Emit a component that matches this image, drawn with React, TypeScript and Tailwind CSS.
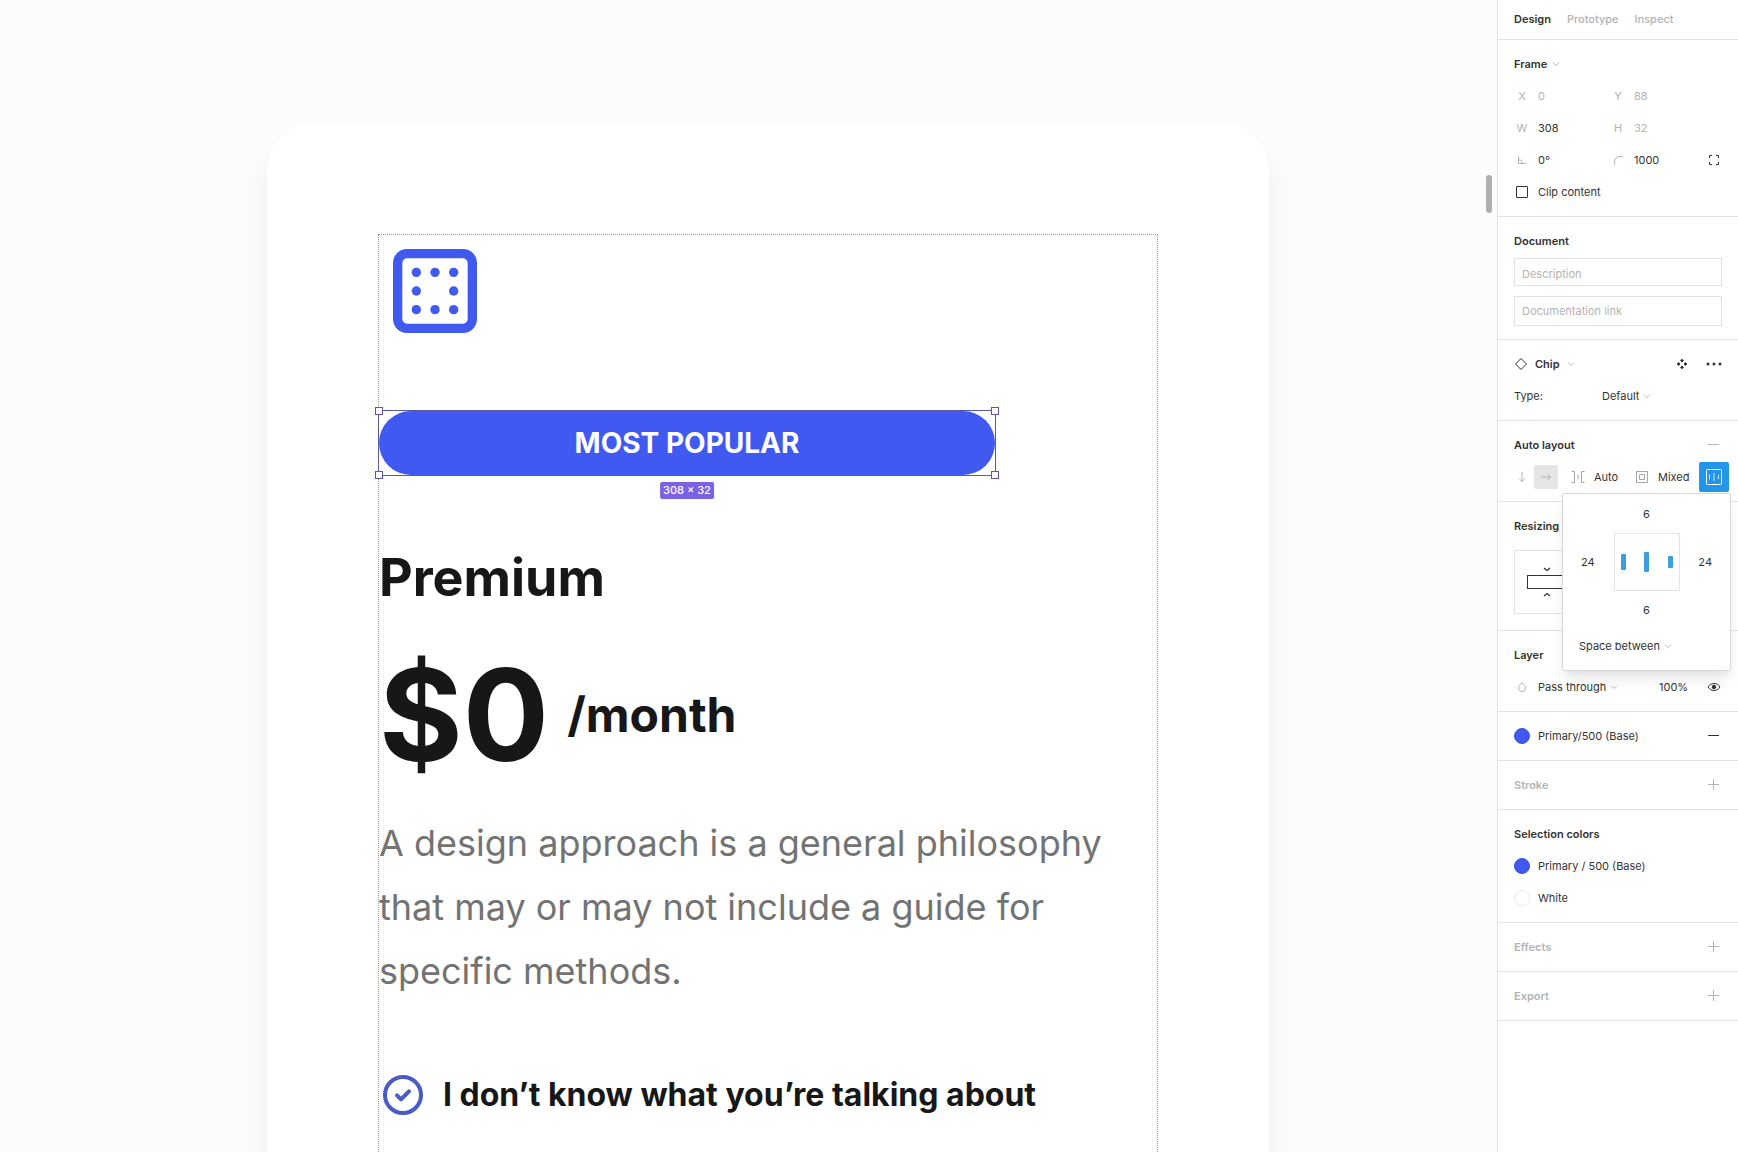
import type { ReactNode } from "react";
import { clsx } from "clsx";

interface SectionProps {
  children: ReactNode;
  className?: string;
}

function Section({ children, className }: SectionProps) {
  return (
    <section className={clsx("border-b border-[#e2e2e2] px-4 pt-2", className ?? "pb-2")}>
      {children}
    </section>
  );
}

interface RowProps {
  children: ReactNode;
  className?: string;
}

function Row({ children, className }: RowProps) {
  return (
    <div className={clsx("flex h-8 items-center", className)}>{children}</div>
  );
}

function Chevron({ className }: { className?: string }) {
  return (
    <svg
      viewBox="0 0 8 8"
      className={clsx("pointer-events-none size-2 text-[#b8b8b8]", className)}
      fill="none"
      stroke="currentColor"
      aria-hidden="true"
    >
      <path d="M1 2.5 4 5.5 7 2.5" />
    </svg>
  );
}

function PlusIcon() {
  return (
    <svg viewBox="0 0 16 16" className="size-4" stroke="currentColor">
      <path d="M2 7.5h11M7.5 2v11" />
    </svg>
  );
}

function MinusIcon() {
  return (
    <svg viewBox="0 0 16 16" className="size-4" stroke="currentColor">
      <path d="M2 7.5h11" />
    </svg>
  );
}

function AngleIcon() {
  return (
    <svg viewBox="0 0 16 16" className="size-4" fill="none" stroke="currentColor">
      <path d="M4.5 4v7.5H12M4.5 7.5a4 4 0 0 1 4 4" />
    </svg>
  );
}

function RadiusIcon() {
  return (
    <svg viewBox="0 0 16 16" className="size-4" fill="none" stroke="currentColor">
      <path d="M4.5 13v-3a5.500 5.500 0 0 1 5.500-5.500H13" />
    </svg>
  );
}

interface FieldProps {
  label: string;
  icon: ReactNode;
  value: string;
  muted?: boolean;
}

function Field({ label, icon, value, muted = false }: FieldProps) {
  return (
    <label className="flex items-center gap-2">
      <span className="flex w-4 justify-center text-[#b3b3b3]">{icon}</span>
      <input
        aria-label={label}
        defaultValue={value}
        className={clsx(
          "w-12 bg-transparent outline-none",
          muted ? "text-[#b3b3b3]" : "text-[#333333]",
        )}
      />
    </label>
  );
}

interface DropdownProps {
  label: string;
  options: string[];
}

function Dropdown({ label, options }: DropdownProps) {
  return (
    <div className="flex items-center gap-1">
      <select
        aria-label={label}
        className="field-sizing-content appearance-none bg-transparent outline-none"
      >
        {options.map((option) => (
          <option key={option}>{option}</option>
        ))}
      </select>
      <Chevron />
    </div>
  );
}

interface SwatchProps {
  name: string;
  className: string;
}

function Swatch({ name, className }: SwatchProps) {
  return (
    <button type="button" className="flex items-center gap-2">
      <span className={clsx("size-4 rounded-full border", className)} />
      {name}
    </button>
  );
}

function EmptySection({ title }: { title: string }) {
  return (
    <Section className="pb-2 text-[#b3b3b3]">
      <Row className="justify-between">
        <h2 className="font-semibold">{title}</h2>
        <button type="button" aria-label={`Add ${title}`}>
          <PlusIcon />
        </button>
      </Row>
    </Section>
  );
}

function AlignmentPopover() {
  return (
    <div className="absolute top-[72px] right-[7px] z-10 flex h-[178px] w-[169px] flex-col rounded-xs border border-[#d9d9d9] bg-white shadow-lg">
      <div className="flex flex-col items-center pt-3">
        <span className="leading-4">6</span>
        <div className="flex w-full items-center justify-between px-[18px] py-[11px]">
          <span>24</span>
          <div className="flex h-[58px] w-[66px] items-center justify-between border border-[#e5e5e5] px-[6px]">
            <span className="h-4 w-[5px] rounded-[1px] bg-[#3a9fdc]" />
            <span className="h-5 w-[5px] rounded-[1px] bg-[#3a9fdc]" />
            <span className="h-3 w-[5px] rounded-[1px] bg-[#3a9fdc]" />
          </div>
          <span>24</span>
        </div>
        <span className="leading-4">6</span>
      </div>
      <div className="px-4 pt-5">
        <Dropdown label="Spacing mode" options={["Space between", "Packed"]} />
      </div>
    </div>
  );
}

function AutoLayoutSection() {
  return (
    <Section className="relative pb-2">
      <Row className="justify-between">
        <h2 className="font-semibold">Auto layout</h2>
        <button
          type="button"
          aria-label="Remove auto layout"
          className="text-[#b3b3b3]"
        >
          <MinusIcon />
        </button>
      </Row>
      <Row className="-mr-[7px] justify-between">
        <div className="flex items-center gap-3">
          <div className="flex items-center gap-1 text-[#b3b3b3]">
            <button type="button" aria-label="Vertical">
              <svg
                viewBox="0 0 16 16"
                className="size-4"
                fill="none"
                stroke="currentColor"
              >
                <path d="M8 3v9.5M5 9.5l3 3 3-3" />
              </svg>
            </button>
            <button
              type="button"
              aria-label="Horizontal"
              className="flex size-6 items-center justify-center rounded-xs bg-[#e5e5e5]"
            >
              <svg
                viewBox="0 0 16 16"
                className="size-4"
                fill="none"
                stroke="currentColor"
              >
                <path d="M3 8h9.5M9.5 5l3 3-3 3" />
              </svg>
            </button>
          </div>
          <label className="flex items-center gap-2">
            <svg
              viewBox="0 0 16 16"
              className="size-4 text-[#a6a6a6]"
              fill="none"
              stroke="currentColor"
            >
              <path d="M1.500 2.500h3v11h-3M14.500 2.500h-3v11h3M8 5.500v5" />
            </svg>
            <input
              aria-label="Spacing between items"
              defaultValue="Auto"
              className="w-7 bg-transparent outline-none"
            />
          </label>
          <label className="flex items-center gap-2">
            <svg
              viewBox="0 0 16 16"
              className="size-4 text-[#a6a6a6]"
              fill="none"
              stroke="currentColor"
            >
              <path d="M2.500 2.500h11v11h-11zM5.500 5.500h5v5h-5z" />
            </svg>
            <input
              aria-label="Padding"
              defaultValue="Mixed"
              className="w-8 bg-transparent outline-none"
            />
          </label>
        </div>
        <button
          type="button"
          aria-label="Alignment and padding"
          className="flex size-[30px] items-center justify-center rounded-xs bg-[#2196ea] text-white"
        >
          <svg
            viewBox="0 0 16 16"
            className="size-4"
            fill="none"
            stroke="currentColor"
          >
            <rect x=".5" y=".5" width="15" height="15" rx="1" />
            <path d="M3.500 5.500v5M8 4v8M12.500 6v4" opacity=".8" />
          </svg>
        </button>
      </Row>
      <AlignmentPopover />
    </Section>
  );
}

function DesignPanel() {
  return (
    <aside className="w-[241px] shrink-0 border-l border-[#e2e2e2] bg-white text-[11px] leading-4 text-[#333333]">
      <nav className="flex h-10 items-center gap-4 border-b border-[#e2e2e2] px-4 pb-px font-medium text-[#b3b3b3]">
        <button type="button" className="font-semibold text-[#333333]">
          Design
        </button>
        <button type="button">Prototype</button>
        <button type="button">Inspect</button>
      </nav>

      <Section>
        <Row>
          <button type="button" className="flex items-center gap-[5px] font-semibold">
            Frame
            <Chevron />
          </button>
        </Row>
        <Row className="gap-6">
          <Field label="X position" icon="X" value="0" muted />
          <Field label="Y position" icon="Y" value="88" muted />
        </Row>
        <Row className="gap-6">
          <Field label="Width" icon="W" value="308" />
          <Field label="Height" icon="H" value="32" muted />
        </Row>
        <Row className="gap-6">
          <Field label="Rotation" icon={<AngleIcon />} value="0°" />
          <Field label="Corner radius" icon={<RadiusIcon />} value="1000" />
          <button type="button" aria-label="Independent corners" className="ml-auto">
            <svg
              viewBox="0 0 16 16"
              className="size-4"
              fill="none"
              stroke="currentColor"
            >
              <path d="M3.500 6V3.500H6M10 3.500h2.500V6M12.500 10v2.500H10M6 12.500H3.500V10" />
            </svg>
          </button>
        </Row>
        <Row>
          <label className="flex items-center gap-2">
            <span className="flex w-4 justify-center">
              <input
                type="checkbox"
                className="size-3 appearance-none rounded-[1px] border border-[#333333]"
              />
            </span>
            Clip content
          </label>
        </Row>
      </Section>

      <Section className="pb-[13px]">
        <Row>
          <h2 className="font-semibold">Document</h2>
        </Row>
        <div className="flex flex-col gap-[10px] pt-px">
          <input
            aria-label="Description"
            placeholder="Description"
            className="h-7 border border-[#e2e2e2] px-[7px] pt-[3px] outline-none placeholder:text-[#b3b3b3]"
          />
          <input
            aria-label="Documentation link"
            placeholder="Documentation link"
            className="h-[30px] border border-[#e2e2e2] px-[7px] outline-none placeholder:text-[#b3b3b3]"
          />
        </div>
      </Section>

      <Section>
        <Row className="justify-between">
          <button type="button" className="flex items-center gap-[7px] font-semibold">
            <svg
              viewBox="0 0 14 14"
              className="size-[14px]"
              fill="none"
              stroke="currentColor"
            >
              <path d="M7 1.500 12.500 7 7 12.500 1.500 7z" />
            </svg>
            Chip
            <Chevron />
          </button>
          <div className="flex items-center gap-4">
            <button type="button" aria-label="Go to main component">
              <svg
                viewBox="0 0 16 16"
                className="size-4"
                fill="currentColor"
                stroke="currentColor"
                strokeLinejoin="round"
              >
                <path d="M8 3.200 9.400 4.600 8 6 6.600 4.600zM8 10 9.400 11.400 8 12.800 6.600 11.400zM4.600 6.600 6 8 4.600 9.400 3.200 8zM11.400 6.600 12.800 8 11.400 9.400 10 8z" />
              </svg>
            </button>
            <button type="button" aria-label="More options">
              <svg viewBox="0 0 16 16" className="size-4" fill="currentColor">
                <circle cx="2" cy="8" r="1.500" />
                <circle cx="8" cy="8" r="1.500" />
                <circle cx="14" cy="8" r="1.500" />
              </svg>
            </button>
          </div>
        </Row>
        <Row>
          <span className="w-[88px]">Type:</span>
          <Dropdown label="Type" options={["Default", "Outline"]} />
        </Row>
      </Section>

      <AutoLayoutSection />

      <Section className="pb-4">
        <Row>
          <h2 className="font-semibold">Resizing</h2>
        </Row>
        <div className="mt-2 flex h-16 w-[66px] items-center justify-center border border-[#e2e2e2]">
          <svg
            viewBox="0 0 40 34"
            className="h-[34px] w-10"
            fill="none"
            stroke="currentColor"
          >
            <rect x=".5" y="10.500" width="39" height="13" />
            <path d="M17 3l3 2.500L23 3M17 31l3-2.500 3 2.500" strokeWidth="1.300" />
          </svg>
        </div>
      </Section>

      <Section>
        <Row>
          <h2 className="font-semibold">Layer</h2>
        </Row>
        <Row className="justify-between">
          <div className="flex items-center gap-2">
            <svg
              viewBox="0 0 16 16"
              className="size-4 text-[#b3b3b3]"
              fill="none"
              stroke="currentColor"
            >
              <path d="M8 3.500C6.500 5.500 4.500 7 4.500 9a3.500 3.500 0 0 0 7 0c0-2-2-3.500-3.500-5.500z" />
            </svg>
            <Dropdown label="Blend mode" options={["Pass through", "Normal"]} />
          </div>
          <div className="flex items-center gap-3">
            <input
              aria-label="Opacity"
              defaultValue="100%"
              className="w-[35px] bg-transparent outline-none"
            />
            <button type="button" aria-label="Toggle visibility">
              <svg
                viewBox="0 0 16 16"
                className="size-4"
                fill="none"
                stroke="currentColor"
              >
                <path d="M2 8c1.500-2.300 3.600-3.500 6-3.500S12.500 5.700 14 8c-1.500 2.300-3.600 3.500-6 3.500S3.500 10.300 2 8z" />
                <circle cx="8" cy="8" r="1.800" fill="currentColor" />
              </svg>
            </button>
          </div>
        </Row>
      </Section>

      <Section>
        <Row className="justify-between">
          <Swatch
            name="Primary/500 (Base)"
            className="border-[#3a50d8] bg-[#4059f0]"
          />
          <button type="button" aria-label="Remove fill">
            <MinusIcon />
          </button>
        </Row>
      </Section>

      <EmptySection title="Stroke" />

      <Section>
        <Row>
          <h2 className="font-semibold">Selection colors</h2>
        </Row>
        <Row>
          <Swatch
            name="Primary / 500 (Base)"
            className="border-[#3a50d8] bg-[#4059f0]"
          />
        </Row>
        <Row>
          <Swatch name="White" className="border-[#ececec] bg-white" />
        </Row>
      </Section>

      <EmptySection title="Effects" />
      <EmptySection title="Export" />
    </aside>
  );
}

function PlanIcon() {
  const dots = [
    [8, 8],
    [12, 8],
    [16, 8],
    [8, 12],
    [16, 12],
    [8, 16],
    [12, 16],
    [16, 16],
  ];

  return (
    <svg viewBox="0 0 24 24" className="size-28 text-[#4059ee]">
      <rect
        x="4"
        y="4"
        width="16"
        height="16"
        rx="2"
        fill="none"
        stroke="currentColor"
        strokeWidth="2"
      />
      {dots.map(([cx, cy]) => (
        <circle key={`${cx}-${cy}`} cx={cx} cy={cy} r="1" fill="currentColor" />
      ))}
    </svg>
  );
}

function SelectedChip() {
  const handle = "absolute size-2 border border-[#5d55a8] bg-white";

  return (
    <div className="relative -m-px w-[618px] border border-[#5d55a8]">
      <div className="flex h-16 items-center justify-center rounded-full bg-[#4059f0] text-[28px] font-bold text-white">
        MOST POPULAR
      </div>
      <span className={clsx(handle, "-top-1 -left-1")} />
      <span className={clsx(handle, "-top-1 -right-1")} />
      <span className={clsx(handle, "-bottom-1 -left-1")} />
      <span className={clsx(handle, "-right-1 -bottom-1")} />
      <span className="absolute top-full left-1/2 mt-[7px] -translate-x-1/2 rounded-xs bg-[#7b61e4] px-[3px] text-[11px] leading-[17px] font-medium whitespace-nowrap text-white">
        308 × 32
      </span>
    </div>
  );
}

function PricingCard() {
  return (
    <article className="h-[1400px] flex-1 rounded-[48px] bg-white px-[111px] pt-28 shadow-[0_24px_32px_rgba(0,0,0,0.06),0_0_2px_rgba(0,0,0,0.04)]">
      <div className="flex h-full flex-col border border-dotted border-[#999999] text-[#171717]">
        <PlanIcon />
        <div className="mt-16">
          <SelectedChip />
        </div>
        <h1 className="mt-16 text-[52px] leading-[78px] font-bold">Premium</h1>
        <p className="mt-[21px] flex items-center gap-[18px] font-bold">
          <span className="text-[128px] leading-[154px]">$0</span>
          <span className="text-[48px] leading-[72px]">/month</span>
        </p>
        <p className="mt-[19px] text-[36px] leading-[64px] text-[#737373]">
          A design approach is a general philosophy that may or may not include a
          guide for specific methods.
        </p>
        <ul className="mt-[67px]">
          <li className="flex items-center gap-4 text-[32px] leading-[50px] font-bold">
            <svg
              viewBox="0 0 24 24"
              className="size-12 shrink-0 text-[#4a5cc4]"
              fill="none"
              stroke="currentColor"
              strokeWidth="2"
              strokeLinecap="round"
              strokeLinejoin="round"
            >
              <circle cx="12" cy="12" r="9" />
              <path d="M9 12.200 11 14.200 15 10.200" />
            </svg>
            I don’t know what you’re talking about
          </li>
        </ul>
      </div>
    </article>
  );
}

export default function App() {
  return (
    <div className="flex h-screen overflow-hidden bg-white font-['Inter',sans-serif]">
      <main className="relative flex flex-1 items-start overflow-hidden bg-[#fcfcfc] pt-[122px] pr-[228px] pl-[267px]">
        <PricingCard />
        <div className="absolute top-[175px] right-[5px] h-[38px] w-[6px] rounded-full bg-[#b0b0b0]" />
      </main>
      <DesignPanel />
    </div>
  );
}
